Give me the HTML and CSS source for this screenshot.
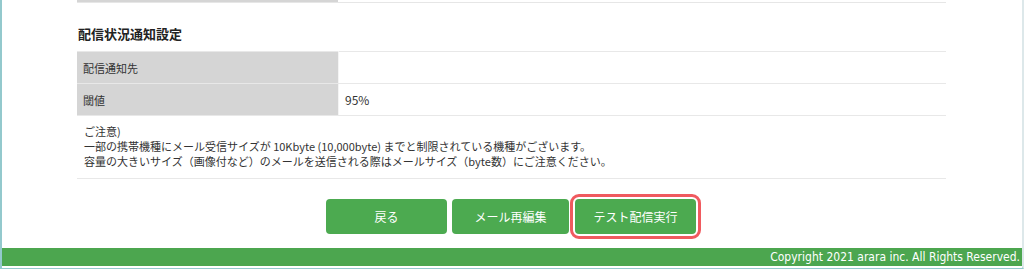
FILE: index.html
```html
<!DOCTYPE HTML>
<html lang="ja">
<head>
    <meta charset="utf-8">
    <title>配信状況通知設定</title>
    <link rel="stylesheet" href="styles.css">
</head>
<body>
    <div class="frame">
        <div class="content">
            <div class="prev-row">
                <div class="prev-label"></div>
            </div>

            <h3>配信状況通知設定</h3>
            <table class="setting-table">
                <tr>
                    <th>配信通知先</th>
                    <td></td>
                </tr>
                <tr>
                    <th>閾値</th>
                    <td class="value">95%</td>
                </tr>
                <tr>
                    <td colspan="2" class="notes">
                        ご注意)<br>
                        一部の携帯機種にメール受信サイズが 10Kbyte (10,000byte) までと制限されている機種がございます。<br>
                        容量の大きいサイズ（画像付など）のメールを送信される際はメールサイズ（byte数）にご注意ください。
                    </td>
                </tr>
            </table>

            <div class="buttons">
                <button type="button">戻る</button>
                <button type="button">メール再編集</button>
                <span class="highlight"><button type="button">テスト配信実行</button></span>
            </div>
        </div>

        <div class="footer">Copyright 2021 arara inc. All Rights Reserved.</div>
    </div>
</body>
</html>
```

FILE: styles.css
```css
html, body {
    margin: 0;
    padding: 0;
    background: white;
}
body {
    font-family: "Noto Sans CJK JP", "Noto Sans", sans-serif;
    font-size: 12px;
    color: #333;
}
.frame {
    height: 267px;
    border-left: 2px solid #93c9cd;
    border-right: 2px solid #dde8ea;
    border-bottom: 2px solid #93c9cd;
    box-sizing: content-box;
    width: 1020px;
}
.content {
    margin-left: 75px;
    width: 869px;
}
.prev-row {
    height: 2px;
    border-bottom: 1px solid #e6e6e6;
}
.prev-label {
    width: 261px;
    height: 2px;
    background: #d5d5d5;
}
h3 {
    margin: 0;
    padding: 21px 0 0 1px;
    height: 27px;
    font-size: 13px;
    font-weight: bold;
    color: #222;
    line-height: 20px;
}
.setting-table {
    width: 100%;
    border-collapse: collapse;
}
.setting-table th,
.setting-table td {
    height: 31px;
    padding: 0 6px;
    border-top: 1px solid #e8e8e8;
    border-bottom: 1px solid #e8e8e8;
    text-align: left;
    font-weight: normal;
    font-size: 11px;
}
.setting-table th {
    width: 249px;
    background: #d5d5d5;
    border-right: 1px solid #f4f4f4;
}
.setting-table td.value {
    font-size: 12px;
}
.setting-table td.notes {
    padding: 8px 7px 9px;
    line-height: 15px;
    height: auto;
    font-size: 11px;
}
.buttons {
    display: flex;
    justify-content: center;
    align-items: center;
    gap: 5px;
    margin-top: 18px;
    height: 38px;
    padding-left: 4px;
}
button {
    background-color: #4caa50;
    color: white;
    border: none;
    border-radius: 4px;
    width: 121px;
    height: 35px;
    font-family: "Noto Sans CJK JP", sans-serif;
    font-size: 12px;
    cursor: pointer;
}
.buttons button:nth-child(2) {
    width: 117px;
}
.highlight {
    display: inline-flex;
    margin-left: -4px;
    padding: 2px;
    border: 3px solid #f05a5f;
    border-radius: 9px;
}
.footer {
    margin-top: 13px;
    height: 18px;
    border-bottom: 2px solid white;
    background: #4ca64f;
    color: white;
    text-align: right;
    font-family: "DejaVu Sans Condensed", "DejaVu Sans", sans-serif;
    font-stretch: condensed;
    font-size: 12px;
    line-height: 18px;
    padding-right: 2px;
}
```
